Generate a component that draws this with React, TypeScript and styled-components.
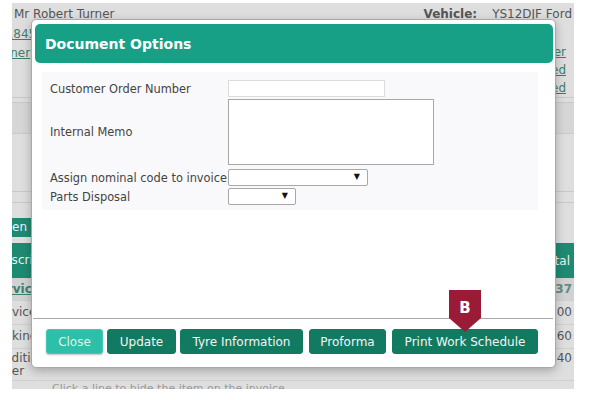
import styled, { createGlobalStyle } from "styled-components";

const GlobalStyle = createGlobalStyle`
  html, body {
    margin: 0;
    padding: 0;
    background: #ffffff;
  }
  body {
    width: 590px;
    height: 400px;
    overflow: hidden;
    font-family: "DejaVu Sans", Verdana, sans-serif;
  }
`;

const Screen = styled.div`
  position: relative;
  width: 590px;
  height: 400px;
  box-sizing: border-box;
  padding: 3px 16px 0 12px;
`;

const Sheet = styled.div`
  height: 386px;
  background: #dedede;
  overflow: hidden;
  font-size: 12px;
  color: #555;
  display: flex;
  flex-direction: column;

  & > * {
    flex-shrink: 0;
  }
`;

const TopBar = styled.div`
  display: flex;
  align-items: center;
  height: 22px;
  padding: 0 2px;
`;

const Spacer = styled.div`
  flex: 1;
`;

const FieldLabel = styled.span`
  font-weight: bold;
  margin-right: 15px;
`;

const LinkRow = styled.div`
  display: flex;
  justify-content: space-between;
  align-items: center;
  height: 18px;
`;

const Link = styled.a<{ $shift?: number; $drop?: number }>`
  color: #3d7f6b;
  text-decoration: underline;
  white-space: nowrap;
  margin-left: ${(p) => (p.$shift ? `${p.$shift}px` : "0")};
  margin-right: 8px;
  position: relative;
  top: ${(p) => p.$drop || 0}px;
`;

const Band = styled.div<{ $h: number; $tone?: string }>`
  height: ${(p) => p.$h}px;
  border-top: 1px solid #c9c9c9;
  background: ${(p) => p.$tone || "transparent"};
`;

const TabRow = styled.div`
  display: flex;
  margin-top: 2px;
`;

const Tab = styled.div`
  background: #1f8a72;
  color: #eef;
  height: 19px;
  line-height: 19px;
  padding: 0 6px;
  margin-left: -23px;
  white-space: nowrap;
`;

const TableHead = styled.div`
  display: flex;
  justify-content: space-between;
  align-items: center;
  height: 35px;
  margin-top: 6px;
  background: #1f8a72;
  color: #e8f2ef;
  padding-right: 4px;
`;

const TableRow = styled.div<{ $h: number; $dark?: boolean; $top?: number }>`
  display: flex;
  justify-content: space-between;
  align-items: ${(p) => (p.$top ? "flex-start" : "center")};
  height: ${(p) => p.$h}px;
  box-sizing: border-box;
  padding: ${(p) => p.$top || 0}px 2px 0 0;
  border-top: 1px solid #cfcfcf;
  background: ${(p) => (p.$dark ? "#d2d2d2" : "transparent")};
`;

const Cell = styled.span<{ $bold?: boolean; $link?: boolean }>`
  display: flex;
  flex-direction: column;
  line-height: 13px;
  font-weight: ${(p) => (p.$bold ? "bold" : "normal")};
  color: ${(p) => (p.$link ? "#3d7f6b" : "inherit")};
  text-decoration: ${(p) => (p.$link ? "underline" : "none")};
`;

const Line = styled.span<{ $shift: number }>`
  margin-left: ${(p) => p.$shift}px;
  white-space: nowrap;
`;

const Amount = styled.span<{ $bold?: boolean }>`
  line-height: 13px;
  font-weight: ${(p) => (p.$bold ? "bold" : "normal")};
  color: ${(p) => (p.$bold ? "#5d8c80" : "inherit")};
`;

const FootNote = styled.div`
  border-top: 1px solid #cfcfcf;
  padding: 1px 0 0 40px;
  color: #999;
  font-size: 11px;
  line-height: 14px;
  white-space: nowrap;
`;

/* modal */

const Modal = styled.div`
  position: absolute;
  left: 31px;
  top: 19px;
  width: 525px;
  height: 349px;
  box-sizing: border-box;
  background: #ffffff;
  border: 1px solid #a9a9a9;
  border-radius: 5px;
  box-shadow: 0 3px 10px rgba(0, 0, 0, 0.25);
  display: flex;
  flex-direction: column;
`;

const Header = styled.div`
  margin: 4px 2px 0 3px;
  height: 39px;
  background: #17a085;
  border-radius: 5px;
  display: flex;
  align-items: center;
  padding-left: 10px;
  color: #ffffff;
  font-weight: bold;
  font-size: 14px;
`;

const FormPanel = styled.div`
  margin: 9px 17px 0 10px;
  height: 138px;
  box-sizing: border-box;
  padding: 8px 8px 0;
  background: #f9f9fb;
  display: grid;
  grid-template-columns: 178px 1fr;
  grid-auto-rows: min-content;
  align-items: center;
  row-gap: 2px;
  font-size: 11.4px;
  color: #444;
`;

const Label = styled.label<{ $top?: number }>`
  margin-top: ${(p) => p.$top || 0}px;
  white-space: nowrap;
`;

const TextInput = styled.input<{ $w: number }>`
  display: block;
  width: ${(p) => p.$w}px;
  height: 17px;
  box-sizing: border-box;
  border: 1px solid #dcdcdc;
  background: #fff;
  padding: 0 3px;
  margin: 0;
`;

const Memo = styled.textarea`
  display: block;
  width: 206px;
  height: 66px;
  box-sizing: border-box;
  border: 1px solid #a8a8a8;
  background: #fff;
  resize: none;
  margin: 0;
`;

const SelectWrap = styled.div<{ $w: number; $top?: number }>`
  position: relative;
  width: ${(p) => p.$w}px;
  height: 17px;
  margin-top: ${(p) => p.$top || 0}px;
`;

const Select = styled.select`
  display: block;
  appearance: none;
  width: 100%;
  height: 100%;
  box-sizing: border-box;
  border: 1px solid #a8a8a8;
  border-radius: 2px;
  background: #fff;
  margin: 0;
  padding: 0 3px;
`;

const Arrow = styled.span`
  position: absolute;
  right: 8px;
  top: 3px;
  font-size: 8px;
  line-height: 10px;
  color: #111;
  pointer-events: none;
`;

const Footer = styled.div`
  margin: auto 2px 0 1px;
  border-top: 1px solid #a9a9a9;
  padding: 10px 0 13px 13px;
  display: flex;
  gap: 4px;
`;

const Button = styled.button<{ $light?: boolean; $gap?: number; $w: number }>`
  width: ${(p) => p.$w}px;
  height: 25px;
  margin: 0 0 0 ${(p) => p.$gap || 0}px;
  padding: 0;
  border: 1px solid ${(p) => (p.$light ? "#43c9b2" : "#137a62")};
  border-radius: 3px;
  background: ${(p) => (p.$light ? "#2dbfa7" : "#137a62")};
  color: ${(p) => (p.$light ? "#dcf6f0" : "#f4f4f4")};
  font-family: "DejaVu Sans", Verdana, sans-serif;
  font-size: 12px;
  white-space: nowrap;
  box-shadow: ${(p) => (p.$light ? "0 1px 2px rgba(0,0,0,0.25)" : "none")};
  cursor: pointer;
`;

const Badge = styled.div`
  position: absolute;
  left: 449px;
  top: 290px;
  width: 32px;
  height: 42px;
  background: #9a1b36;
  clip-path: polygon(0 0, 100% 0, 100% 28px, 50% 42px, 0 28px);
  color: #ffffff;
  font-weight: bold;
  font-size: 15px;
  display: flex;
  justify-content: center;
  padding-top: 9px;
  box-sizing: border-box;
`;

interface Row {
  lines: { text: string; shift: number }[];
  right: string;
  h: number;
  dark?: boolean;
  bold?: boolean;
  top?: number;
}

const rows: Row[] = [
  { lines: [{ text: "Service", shift: -22 }], right: "£145.37", h: 22, dark: true, bold: true },
  { lines: [{ text: "Service", shift: -20 }], right: "£120.00", h: 24 },
  { lines: [{ text: "Booking", shift: -23 }], right: "£112.60", h: 24 },
  {
    lines: [
      { text: "Additional", shift: -16 },
      { text: "Cover", shift: -23 },
    ],
    right: "£118.40",
    h: 32,
    top: 3,
  },
];

export default function App() {
  return (
    <>
      <GlobalStyle />
      <Screen>
        <Sheet>
          <TopBar>
            <span>Mr Robert Turner</span>
            <Spacer />
            <FieldLabel>Vehicle:</FieldLabel>
            <span>YS12DJF Ford</span>
          </TopBar>
          <LinkRow>
            <Link $shift={-14}>01845 612345</Link>
            <span />
          </LinkRow>
          <LinkRow>
            <Link $shift={-21} $drop={1}>Owner</Link>
            <Link>Customer</Link>
          </LinkRow>
          <LinkRow>
            <span />
            <Link>Booked</Link>
          </LinkRow>
          <LinkRow>
            <span />
            <Link>Collected</Link>
          </LinkRow>
          <Band $h={4} />
          <Band $h={30} $tone="#d6d6d6" />
          <Band $h={57} />
          <Band $h={10} />
          <Band $h={13} />
          <TabRow>
            <Tab>Open</Tab>
          </TabRow>
          <TableHead>
            <Cell>
              <Line $shift={-17}>Description</Line>
            </Cell>
            <span>Total</span>
          </TableHead>
          {rows.map((r, i) => (
            <TableRow key={i} $h={r.h} $dark={r.dark} $top={r.top}>
              <Cell $bold={r.bold} $link={r.bold}>
                {r.lines.map((l) => (
                  <Line key={l.text} $shift={l.shift}>
                    {l.text}
                  </Line>
                ))}
              </Cell>
              <Amount $bold={r.bold}>{r.right}</Amount>
            </TableRow>
          ))}
          <FootNote>Click a line to hide the item on the invoice</FootNote>
        </Sheet>

        <Modal>
          <Header>Document Options</Header>
          <FormPanel>
            <Label>Customer Order Number</Label>
            <TextInput $w={157} />
            <Label>Internal Memo</Label>
            <Memo />
            <Label $top={2}>Assign nominal code to invoice</Label>
            <SelectWrap $w={140} $top={2}>
              <Select />
              <Arrow>▼</Arrow>
            </SelectWrap>
            <Label>Parts Disposal</Label>
            <SelectWrap $w={68}>
              <Select />
              <Arrow>▼</Arrow>
            </SelectWrap>
          </FormPanel>
          <Footer>
            <Button $light $w={57}>Close</Button>
            <Button $w={69}>Update</Button>
            <Button $w={123}>Tyre Information</Button>
            <Button $w={77} $gap={2}>Proforma</Button>
            <Button $w={146} $gap={2}>Print Work Schedule</Button>
          </Footer>
        </Modal>
        <Badge>B</Badge>
      </Screen>
    </>
  );
}
